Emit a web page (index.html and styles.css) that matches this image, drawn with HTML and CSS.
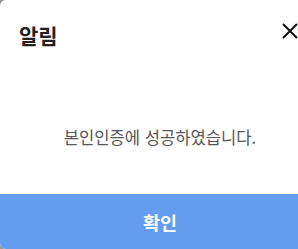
FILE: index.html
```html
<!DOCTYPE html>
<html lang="ko">
<head>
  <meta charset="UTF-8" />
  <meta name="viewport" content="width=device-width, initial-scale=1.0"/>
  <title>알림</title>
  <link rel="stylesheet" href="styles.css">
</head>
<body>
  <div class="modal">
    <div class="modal-head">
      <h2 class="modal-title">알림</h2>
      <button class="close" aria-label="닫기">
        <svg width="16" height="16" viewBox="0 0 16 16"><path d="M1 1L15 15M15 1L1 15" stroke="#111" stroke-width="2" fill="none"/></svg>
      </button>
    </div>
    <div class="modal-body">본인인증에 성공하였습니다.</div>
    <button class="confirm">확인</button>
  </div>
</body>
</html>
```

FILE: styles.css
```css
body {
  margin: 0;
  background: #9a9a9a;
  font-family: "Noto Sans CJK KR", "Noto Sans", sans-serif;
  overflow: hidden;
}
.modal {
  width: 320px;
  height: 249px;
  background: #fff;
  border-radius: 6px;
  overflow: hidden;
  display: flex;
  flex-direction: column;
}
.modal-head {
  display: flex;
  justify-content: space-between;
  align-items: center;
  padding: 20px 22px 0 19px;
}
.modal-title {
  margin: 0;
  font-size: 21px;
  font-weight: bold;
  color: #222;
  line-height: 30px;
}
.close {
  border: none;
  background: none;
  padding: 0;
  margin-top: -8px;
  display: flex;
}
.modal-body {
  flex: 1;
  display: flex;
  align-items: center;
  justify-content: center;
  font-size: 16.6px;
  color: #555;
  padding-top: 30px;
}
.confirm {
  height: 55px;
  border: none;
  background: #649cf0;
  color: #fff;
  font-family: inherit;
  font-size: 18.5px;
  font-weight: bold;
}
```
